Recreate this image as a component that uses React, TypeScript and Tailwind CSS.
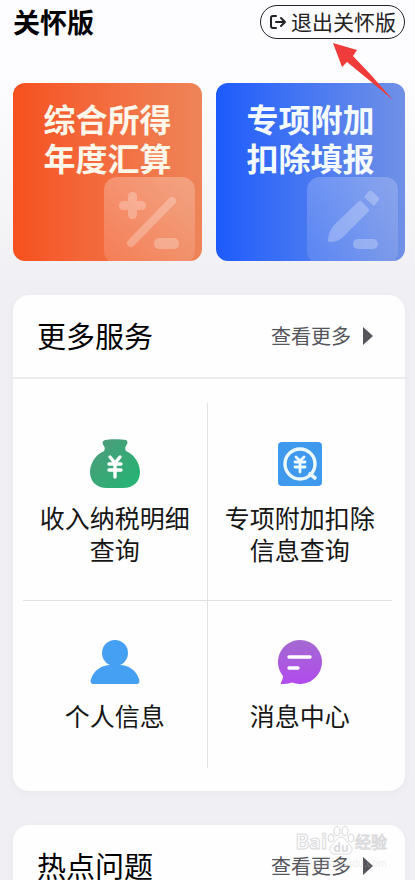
import React from "react";

interface Service {
  id: string;
  lines: string[];
  icon: React.ReactNode;
}

function BagIcon() {
  return (
    <svg width="52" height="50" viewBox="0 0 52 50" aria-hidden="true">
      <defs>
        <linearGradient id="bag" x1="0" y1="0" x2="1" y2="1">
          <stop offset="0" stopColor="#519a7b" />
          <stop offset="1" stopColor="#22b573" />
        </linearGradient>
      </defs>
      <path
        d="M16 1C20 0 32 0 37 1C39 2 39 4 37 7C36 9 36 10 37 12C46 16 51 25 51 33C51 43 44 49 34 49H18C8 49 1 43 1 33C1 25 6 16 15 12C16 10 16 9 15 7C13 4 13 2 16 1Z"
        fill="url(#bag)"
      />
      <path
        d="M21 18L26 24L31 18M20 25H32M20 31H32M26 24V38"
        fill="none"
        stroke="#fff"
        strokeWidth="3.4"
        strokeLinecap="round"
      />
    </svg>
  );
}

function QueryIcon() {
  return (
    <svg width="44" height="44" viewBox="0 0 44 44" aria-hidden="true">
      <rect width="44" height="44" rx="4" fill="#3f99ec" />
      <circle cx="22" cy="22" r="15" fill="none" stroke="#ecf9ff" strokeWidth="3.4" />
      <path d="M32 32L37 36" stroke="#ecf9ff" strokeWidth="3.6" strokeLinecap="round" />
      <path
        d="M18 15L22 19L26 15M17 20H27M17 25H27M22 19V30"
        fill="none"
        stroke="#ecf9ff"
        strokeWidth="2.8"
        strokeLinecap="round"
      />
    </svg>
  );
}

function PersonIcon() {
  return (
    <svg width="50" height="44" viewBox="0 0 50 44" aria-hidden="true">
      <path
        d="M4 44C1 44 0 42 1 39C4 30 12 25 20 25H30C38 25 46 30 49 39C50 42 49 44 46 44Z"
        fill="#459ff2"
      />
      <circle cx="25" cy="13" r="13" fill="#459ff2" />
    </svg>
  );
}

function MessageIcon() {
  return (
    <svg width="44" height="44" viewBox="0 0 44 44" aria-hidden="true">
      <defs>
        <linearGradient id="msg" x1="0" y1="0" x2="0" y2="1">
          <stop offset="0" stopColor="#a36ad0" />
          <stop offset="1" stopColor="#b24bed" />
        </linearGradient>
      </defs>
      <path
        d="M22 0A22 22 0 1 1 14 42.500C11 44 6 44 3 44C2 43 5 40 5 36A22 22 0 0 1 22 0Z"
        fill="url(#msg)"
      />
      <path d="M11 17H32M11 28H20" stroke="#fff" strokeWidth="3.4" strokeLinecap="round" />
    </svg>
  );
}

function CalcArt() {
  return (
    <svg width="92" height="84" viewBox="0 0 92 84" aria-hidden="true">
      <defs>
        <linearGradient id="calc" x1="0" y1="0" x2="0" y2="1">
          <stop offset="0" stopColor="#fff" stopOpacity="0.26" />
          <stop offset="1" stopColor="#fff" stopOpacity="0.12" />
        </linearGradient>
      </defs>
      <rect width="91" height="87" rx="13" fill="url(#calc)" />
      <g fill="#fff" fillOpacity="0.26">
        <path d="M24 20Q24 15 28.500 15Q33 15 33 20V24H37Q42 24 42 28.500Q42 33 37 33H33V37Q33 42 28.500 42Q24 42 24 37V33H20Q15 33 15 28.500Q15 24 20 24H24Z" />
        <rect x="50" y="61" width="25" height="11" rx="5" />
      </g>
      <path
        d="M27 66L68 24"
        stroke="#fff"
        strokeOpacity="0.26"
        strokeWidth="8"
        strokeLinecap="round"
      />
    </svg>
  );
}

function PencilArt() {
  return (
    <svg width="92" height="84" viewBox="0 0 92 84" aria-hidden="true">
      <defs>
        <linearGradient id="pen" x1="0" y1="0" x2="0" y2="1">
          <stop offset="0" stopColor="#fff" stopOpacity="0.2" />
          <stop offset="1" stopColor="#fff" stopOpacity="0.1" />
        </linearGradient>
      </defs>
      <rect width="91" height="87" rx="13" fill="url(#pen)" />
      <g fill="#fff" fillOpacity="0.26">
        <path d="M62 14Q64 13 66 15L71 20Q73 22 71 24L67 29L57 20Z" />
        <path d="M51 25Q53 23 55 25L61 31Q63 33 61 35L36 60Q31 65 23 65Q20 65 21 62Q22 54 27 48Z" />
        <rect x="46" y="62" width="25" height="10" rx="5" />
      </g>
    </svg>
  );
}

function ExitIcon() {
  return (
    <svg
      width="18"
      height="16"
      viewBox="0 0 18 16"
      fill="none"
      stroke="#222"
      strokeWidth="2"
      strokeLinecap="round"
      strokeLinejoin="round"
      aria-hidden="true"
    >
      <path d="M7 2H4Q2 2 2 4V12Q2 14 4 14H7M7 8H16M12 4L16 8L12 12" />
    </svg>
  );
}

function MoreLink() {
  return (
    <a href="#more" className="flex items-center gap-3 text-xl text-[#55555c]">
      查看更多
      <svg width="10" height="18" viewBox="0 0 10 18" aria-hidden="true">
        <path d="M0 0L10 9L0 18Z" fill="#55555c" />
      </svg>
    </a>
  );
}

const services: Service[] = [
  { id: "income", lines: ["收入纳税明细", "查询"], icon: <BagIcon /> },
  { id: "deduction", lines: ["专项附加扣除", "信息查询"], icon: <QueryIcon /> },
  { id: "profile", lines: ["个人信息"], icon: <PersonIcon /> },
  { id: "message", lines: ["消息中心"], icon: <MessageIcon /> },
];

function ServiceButton({ service }: { service: Service }) {
  return (
    <button className="flex w-full flex-col items-center text-[25px] leading-8 text-[#161616]">
      <span className="mb-3 flex h-[50px] items-center">{service.icon}</span>
      {service.lines.map((line) => (
        <span key={line} className="whitespace-nowrap">
          {line}
        </span>
      ))}
    </button>
  );
}

function Watermark() {
  return (
    <div className="pointer-events-none absolute top-[825px] right-7 flex flex-col items-end text-[#d2d2d6] opacity-80">
      <div className="flex items-end">
        <span className="text-xl leading-8 font-bold text-white [-webkit-text-stroke:1px_#d2d2d6]">
          Bai
        </span>
        <span className="relative flex h-8 w-7 items-end justify-center">
          <svg
            className="absolute inset-0"
            width="28"
            height="32"
            viewBox="0 0 28 32"
            fill="#fff"
            stroke="#d2d2d6"
            aria-hidden="true"
          >
            <ellipse cx="4" cy="13" rx="3" ry="4" />
            <ellipse cx="10" cy="6" rx="3" ry="4.500" />
            <ellipse cx="18" cy="6" rx="3" ry="4.500" />
            <ellipse cx="24" cy="13" rx="3" ry="4" />
            <path d="M14 12C18 12 19 17 23 20C28 25 23 30 18 29H10C4 30 0 25 5 20C9 17 10 12 14 12Z" />
          </svg>
          <span className="relative text-xs leading-5 font-bold">du</span>
        </span>
        <span className="text-base leading-8 text-white [-webkit-text-stroke:1px_#d2d2d6]">
          经验
        </span>
      </div>
      <span className="text-[10px] leading-3 opacity-40">jingyan.baidu.com</span>
    </div>
  );
}

export default function App() {
  return (
    <main className="relative h-screen overflow-hidden bg-[#f0eff3] bg-[linear-gradient(to_bottom,#fdfcfe_70px,#f0eff3_290px)] pr-[10px] pl-[13px] font-['Noto_Sans_CJK_SC',sans-serif]">
      <header className="flex h-11 items-center justify-between">
        <h1 className="text-[27px] leading-8 font-bold text-black">关怀版</h1>
        <button className="flex h-[34px] items-center gap-1 rounded-full border border-[#222] px-2 text-[21px] whitespace-nowrap text-[#222]">
          <ExitIcon />
          退出关怀版
        </button>
      </header>

      <div className="mt-[39px] grid grid-cols-2 gap-[14px]">
        <button className="relative flex h-[178px] justify-center overflow-hidden rounded-xl bg-linear-to-r from-[#f6501d] to-[#ee8458] pt-4 text-[32px] leading-[39px] font-bold text-[#fff7ea]">
          <span className="absolute right-[6px] bottom-0">
            <CalcArt />
          </span>
          <span className="relative self-start">
            综合所得
            <br />
            年度汇算
          </span>
        </button>
        <button className="relative flex h-[178px] justify-center overflow-hidden rounded-xl bg-linear-to-r from-[#1c5afb] to-[#7090e6] pt-4 text-[32px] leading-[39px] font-bold text-[#f4fbff]">
          <span className="absolute right-[6px] bottom-0">
            <PencilArt />
          </span>
          <span className="relative self-start">
            专项附加
            <br />
            扣除填报
          </span>
        </button>
      </div>

      <section className="mt-[34px] rounded-2xl bg-[#fefefe] shadow-[0_2px_8px_rgba(0,0,0,0.04)]">
        <div className="flex h-[84px] items-center justify-between border-b-2 border-[#ececee] pr-8 pl-6">
          <h2 className="text-[29px] text-black">更多服务</h2>
          <MoreLink />
        </div>
        <div className="pt-6 pr-[13px] pb-[23px] pl-[10px]">
          <div className="grid grid-cols-2 border-b border-[#e2e2e4]">
            {services.slice(0, 2).map((service) => (
              <div
                key={service.id}
                className="h-[197px] border-[#e2e2e4] pt-9 odd:border-r"
              >
                <ServiceButton service={service} />
              </div>
            ))}
          </div>
          <div className="grid grid-cols-2">
            {services.slice(2).map((service) => (
              <div
                key={service.id}
                className="h-[167px] border-[#e2e2e4] pt-9 odd:border-r"
              >
                <ServiceButton service={service} />
              </div>
            ))}
          </div>
        </div>
      </section>

      <section className="mt-[34px] rounded-t-2xl bg-[#fefefe] shadow-[0_2px_8px_rgba(0,0,0,0.04)]">
        <div className="flex h-[84px] items-center justify-between border-b-2 border-[#ececee] pr-8 pl-6">
          <h2 className="text-[29px] text-black">热点问题</h2>
          <MoreLink />
        </div>
      </section>

      <Watermark />

      {/* Arrow pointing at the exit button */}
      <svg
        className="pointer-events-none absolute top-[42px] right-[22px]"
        width="60"
        height="58"
        viewBox="0 0 60 58"
        aria-hidden="true"
      >
        <path d="M0 1L24 8L20 14L38 33L60 58L36 38L14 20L9 25Z" fill="#ef3b3a" />
      </svg>
    </main>
  );
}
